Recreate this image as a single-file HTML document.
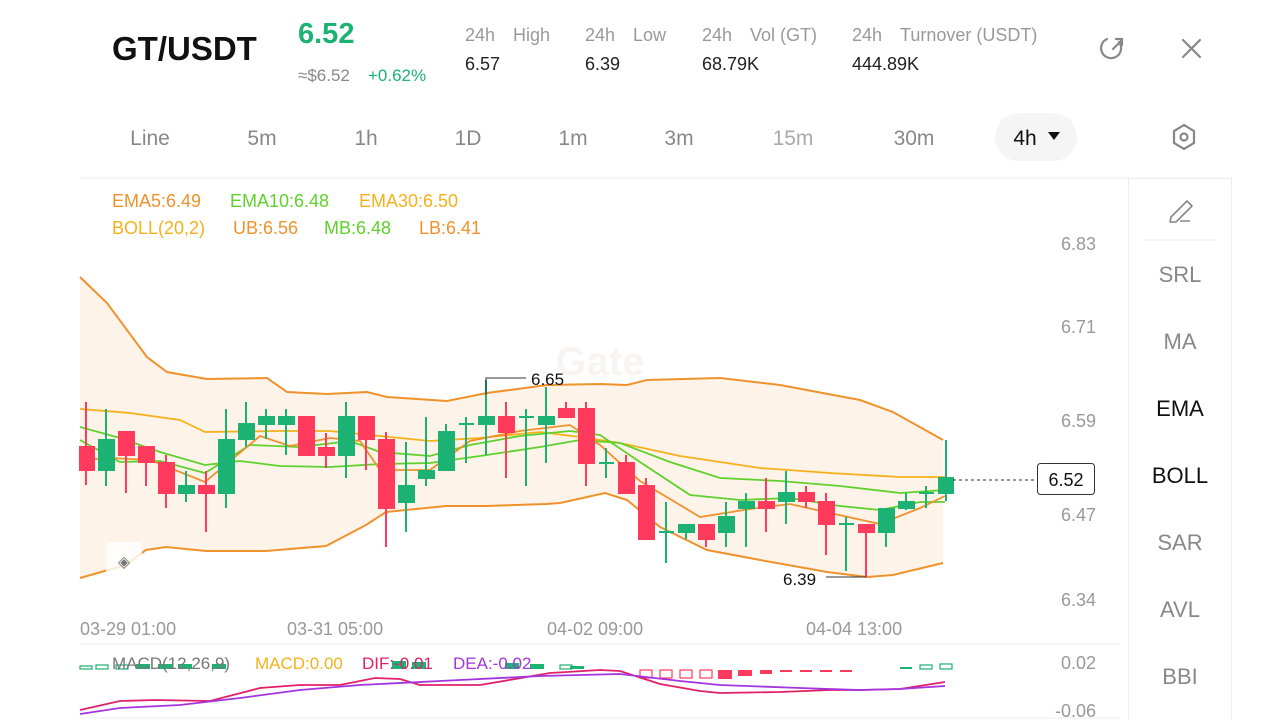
<!DOCTYPE html>
<html><head><meta charset="utf-8"><style>
html,body{margin:0;padding:0;background:#fff;width:1280px;height:720px;overflow:hidden;font-family:"Liberation Sans",Arial,sans-serif}
svg{display:block}
</style></head><body>
<svg width="1280" height="720" viewBox="0 0 1280 720" xmlns="http://www.w3.org/2000/svg" font-family="Liberation Sans, Arial, sans-serif">
<!-- header -->
<text x="112" y="60" font-size="33" font-weight="bold" fill="#111">GT/USDT</text>
<text x="298" y="43" font-size="29" font-weight="bold" fill="#1bb273">6.52</text>
<text x="298" y="81" font-size="17" fill="#888">≈$6.52</text>
<text x="368" y="81" font-size="17" fill="#1bb273">+0.62%</text>
<g font-size="18" fill="#999"><text x="465" y="41">24h</text><text x="513" y="41">High</text><text x="585" y="41">24h</text><text x="633" y="41">Low</text><text x="702" y="41">24h</text><text x="750" y="41">Vol (GT)</text><text x="852" y="41">24h</text><text x="900" y="41">Turnover (USDT)</text></g>
<g font-size="18" fill="#222"><text x="465" y="70">6.57</text><text x="585" y="70">6.39</text><text x="702" y="70">68.79K</text><text x="852" y="70">444.89K</text></g>
<g stroke="#888" stroke-width="2.2" fill="none" stroke-linecap="round">
<path d="M1119 42 A10 10 0 1 1 1107 39"/><path d="M1113 49 L1122 40 M1116 39 L1122 39 L1122 45"/>
<path d="M1183 40 L1200 57 M1200 40 L1183 57"/>
<path d="M1184 125 L1194 131 L1194 143 L1184 149 L1174 143 L1174 131 Z"/><circle cx="1184" cy="137" r="3.5"/>
</g>
<!-- tabs -->
<rect x="995" y="113" width="82" height="48" rx="24" fill="#f5f5f5"/>
<g font-size="21" fill="#888" text-anchor="middle">
<text x="150" y="145">Line</text><text x="262" y="145">5m</text><text x="366" y="145">1h</text><text x="468" y="145">1D</text><text x="573" y="145">1m</text><text x="679" y="145">3m</text><text x="793" y="145" fill="#aaa">15m</text><text x="914" y="145">30m</text>
<text x="1025" y="145" fill="#111">4h</text></g>
<path d="M1048 132 L1060 132 L1054 140 Z" fill="#111"/>
<!-- frame lines -->
<line x1="80" y1="178" x2="1232" y2="178" stroke="#eee"/>
<rect x="1128.5" y="178.5" width="103" height="545" fill="none" stroke="#eee"/>
<line x1="1144" y1="240" x2="1216" y2="240" stroke="#eee"/>
<path d="M1171 217 L1187 201 L1192 206 L1176 222 L1170 222 Z M1180 221 L1190 221" stroke="#888" stroke-width="1.6" fill="none" stroke-linejoin="round"/>
<g font-size="22" fill="#888" text-anchor="middle">
<text x="1180" y="282">SRL</text><text x="1180" y="349">MA</text><text x="1180" y="416" fill="#111">EMA</text><text x="1180" y="483" fill="#111">BOLL</text><text x="1180" y="550">SAR</text><text x="1180" y="617">AVL</text><text x="1180" y="684">BBI</text></g>
<!-- legend -->
<g font-size="18"><text x="112" y="207" fill="#f0922b">EMA5:6.49</text><text x="230" y="207" fill="#5fd12c">EMA10:6.48</text><text x="359" y="207" fill="#f5b11b">EMA30:6.50</text>
<text x="112" y="234" fill="#f5b11b">BOLL(20,2)</text><text x="233" y="234" fill="#f0922b">UB:6.56</text><text x="324" y="234" fill="#5fd12c">MB:6.48</text><text x="419" y="234" fill="#f0922b">LB:6.41</text></g>
<g font-size="18" fill="#999" text-anchor="end"><text x="1096" y="250">6.83</text><text x="1096" y="333">6.71</text><text x="1096" y="427">6.59</text><text x="1096" y="521">6.47</text><text x="1096" y="606">6.34</text></g>
<!-- bands -->
<path d="M80 277 L107 303 L147 357 L167 372 L207 379 L267 378 L287 392 L327 394 L367 392 L387 397 L447 401 L487 393 L547 385 L600 384 L627 385 L647 380 L720 378 L780 385 L860 400 L893 412 L943 440 L943 563 L893 575 L867 577 L827 572 L760 560 L707 550 L660 527 L627 500 L605 493 L560 503 L546 504 L486 506 L446 506 L386 512 L366 525 L326 546 L266 551 L206 551 L166 547 L146 550 L126 565 L80 578 Z" fill="#fef3e8"/>
<g fill="none" stroke="#f0922b" stroke-width="2">
<path d="M80 277 L107 303 L147 357 L167 372 L207 379 L267 378 L287 392 L327 394 L367 392 L387 397 L447 401 L487 393 L547 385 L600 384 L627 385 L647 380 L720 378 L780 385 L860 400 L893 412 L943 440"/>
<path d="M80 578 L126 565 L146 550 L166 547 L206 551 L266 551 L326 546 L366 525 L386 512 L446 506 L486 506 L546 504 L560 503 L605 493 L627 500 L660 527 L707 550 L760 560 L827 572 L867 577 L893 575 L943 563"/>
</g>
<text x="600" y="375" font-size="40" font-weight="bold" fill="#f7f4f2" text-anchor="middle">Gate</text>
<!-- lines -->
<g fill="none" stroke-width="1.8">
<path stroke="#f5b11b" d="M80 409 L130 413 L180 420 L205 432 L280 431 L330 431 L380 436 L430 441 L480 438 L540 432 L580 437 L620 443 L680 456 L760 468 L830 473 L900 477 L945 477"/>
<path stroke="#5fd12c" d="M80 427 L120 438 L160 452 L205 465 L240 461 L280 466 L330 467 L380 464 L430 463 L480 456 L540 447 L580 440 L620 443 L670 462 L720 478 L780 481 L840 486 L900 493 L945 490"/>
<path stroke="#5fd12c" d="M80 440 L120 462 L160 461 L205 473 L250 445 L300 447 L350 441 L380 452 L430 456 L470 445 L520 436 L570 431 L600 435 L640 462 L690 495 L740 500 L790 498 L840 506 L880 510 L920 502 L945 502"/>
<path stroke="#f0922b" d="M80 460 L110 458 L150 460 L205 482 L260 436 L290 446 L330 438 L360 441 L380 470 L430 470 L470 441 L520 431 L570 425 L600 445 L640 481 L700 517 L750 509 L790 504 L830 513 L880 524 L920 508 L945 496"/>
</g>
<!-- candles -->
<g stroke-width="2">
<g stroke="#ff3a5c" fill="#ff3a5c">
<line x1="86" y1="402" x2="86" y2="485"/><rect x="80" y="447" width="14" height="23"/>
<line x1="126" y1="432" x2="126" y2="493"/><rect x="119" y="432" width="15" height="23"/>
<line x1="146" y1="447" x2="146" y2="486"/><rect x="139" y="447" width="15" height="15"/>
<line x1="166" y1="455" x2="166" y2="508"/><rect x="159" y="463" width="15" height="30"/>
<line x1="206" y1="471" x2="206" y2="532"/><rect x="199" y="486" width="15" height="7"/>
<line x1="306" y1="417" x2="306" y2="455"/><rect x="299" y="417" width="15" height="38"/>
<line x1="326" y1="433" x2="326" y2="468"/><rect x="319" y="448" width="15" height="7"/>
<line x1="366" y1="417" x2="366" y2="470"/><rect x="359" y="417" width="15" height="22"/>
<line x1="386" y1="432" x2="386" y2="547"/><rect x="379" y="440" width="15" height="68"/>
<line x1="506" y1="402" x2="506" y2="478"/><rect x="499" y="417" width="15" height="15"/>
<line x1="566" y1="402" x2="566" y2="417"/><rect x="559" y="409" width="15" height="8"/>
<line x1="586" y1="402" x2="586" y2="486"/><rect x="579" y="409" width="15" height="54"/>
<line x1="626" y1="455" x2="626" y2="493"/><rect x="619" y="463" width="15" height="30"/>
<line x1="646" y1="478" x2="646" y2="539"/><rect x="639" y="486" width="15" height="53"/>
<line x1="706" y1="525" x2="706" y2="547"/><rect x="699" y="525" width="15" height="14"/>
<line x1="766" y1="478" x2="766" y2="532"/><rect x="759" y="502" width="15" height="6"/>
<line x1="806" y1="486" x2="806" y2="508"/><rect x="799" y="493" width="15" height="8"/>
<line x1="826" y1="493" x2="826" y2="555"/><rect x="819" y="502" width="15" height="22"/>
<line x1="866" y1="525" x2="866" y2="577"/><rect x="859" y="525" width="15" height="7"/>
</g>
<g stroke="#1bb273" fill="#1bb273">
<line x1="106" y1="409" x2="106" y2="486"/><rect x="99" y="440" width="15" height="30"/>
<line x1="186" y1="471" x2="186" y2="502"/><rect x="179" y="486" width="15" height="7"/>
<line x1="226" y1="409" x2="226" y2="508"/><rect x="219" y="440" width="15" height="53"/>
<line x1="246" y1="402" x2="246" y2="447"/><rect x="239" y="424" width="15" height="15"/>
<line x1="266" y1="409" x2="266" y2="439"/><rect x="259" y="417" width="15" height="7"/>
<line x1="286" y1="409" x2="286" y2="455"/><rect x="279" y="417" width="15" height="7"/>
<line x1="346" y1="402" x2="346" y2="478"/><rect x="339" y="417" width="15" height="38"/>
<line x1="406" y1="442" x2="406" y2="532"/><rect x="399" y="486" width="15" height="16"/>
<line x1="426" y1="417" x2="426" y2="486"/><rect x="419" y="471" width="15" height="7"/>
<line x1="446" y1="424" x2="446" y2="470"/><rect x="439" y="432" width="15" height="38"/>
<line x1="466" y1="417" x2="466" y2="463"/><line x1="459" y1="424" x2="474" y2="424"/>
<line x1="486" y1="380" x2="486" y2="455"/><rect x="479" y="417" width="15" height="7"/>
<line x1="526" y1="409" x2="526" y2="486"/><line x1="519" y1="417" x2="534" y2="417"/>
<line x1="546" y1="387" x2="546" y2="463"/><rect x="539" y="417" width="15" height="7"/>
<line x1="606" y1="448" x2="606" y2="478"/><line x1="599" y1="463" x2="614" y2="463"/>
<line x1="666" y1="502" x2="666" y2="563"/><line x1="659" y1="532" x2="674" y2="532"/>
<line x1="686" y1="525" x2="686" y2="539"/><rect x="679" y="525" width="15" height="7"/>
<line x1="726" y1="502" x2="726" y2="547"/><rect x="719" y="517" width="15" height="15"/>
<line x1="746" y1="493" x2="746" y2="547"/><rect x="739" y="502" width="15" height="6"/>
<line x1="786" y1="471" x2="786" y2="524"/><rect x="779" y="493" width="15" height="8"/>
<line x1="846" y1="517" x2="846" y2="571"/><line x1="839" y1="524" x2="854" y2="524"/>
<line x1="886" y1="509" x2="886" y2="547"/><rect x="879" y="509" width="15" height="23"/>
<line x1="906" y1="493" x2="906" y2="510"/><rect x="899" y="502" width="15" height="6"/>
<line x1="926" y1="486" x2="926" y2="508"/><line x1="919" y1="493" x2="934" y2="493"/>
<line x1="946" y1="440" x2="946" y2="501"/><rect x="939" y="478" width="14" height="15"/>
</g></g>
<!-- markers -->
<path d="M486 395 L486 378 L526 378" stroke="#333" fill="none"/>
<text x="531" y="385" font-size="17" fill="#111">6.65</text>
<line x1="826" y1="577" x2="866" y2="577" stroke="#333"/>
<text x="783" y="585" font-size="17" fill="#111">6.39</text>
<line x1="953" y1="480" x2="1036" y2="480" stroke="#333" stroke-dasharray="3,3"/>
<rect x="1037.5" y="463.5" width="57" height="31" rx="3" fill="#fff" stroke="#333"/>
<text x="1066" y="486" font-size="18" fill="#111" text-anchor="middle">6.52</text>
<rect x="106" y="542" width="36" height="36" rx="4" fill="#fff" opacity="0.8"/>
<text x="124" y="567" font-size="16" fill="#777" text-anchor="middle">◈</text>
<!-- dates -->
<g font-size="18" fill="#999"><text x="80" y="635">03-29 01:00</text><text x="287" y="635">03-31 05:00</text><text x="547" y="635">04-02 09:00</text><text x="806" y="635">04-04 13:00</text></g>
<line x1="80" y1="644" x2="1120" y2="644" stroke="#eee"/>
<line x1="80" y1="718" x2="1120" y2="718" stroke="#eee"/>
<!-- macd -->
<g font-size="18" fill="#999" text-anchor="end"><text x="1096" y="669">0.02</text><text x="1096" y="717">-0.06</text></g>
<g stroke="#1bb273" fill="none" stroke-width="1.2"><rect x="80" y="666" width="12" height="3"/><rect x="96" y="665" width="12" height="4"/><rect x="116" y="665" width="12" height="4"/><rect x="560" y="665" width="12" height="4"/><rect x="920" y="665" width="12" height="4"/><rect x="940" y="664" width="12" height="5"/></g>
<g fill="#1bb273"><rect x="136" y="664" width="14" height="5"/><rect x="158" y="664" width="14" height="5"/><rect x="178" y="664" width="14" height="5"/><rect x="212" y="664" width="14" height="5"/><rect x="392" y="661" width="14" height="8"/><rect x="412" y="662" width="14" height="7"/><rect x="505" y="663" width="14" height="6"/><rect x="530" y="664" width="14" height="5"/><rect x="570" y="666" width="14" height="3"/><rect x="900" y="667" width="12" height="2"/></g>
<g stroke="#ff3a5c" fill="none" stroke-width="1.2"><rect x="640" y="670" width="12" height="8"/><rect x="660" y="670" width="12" height="8"/><rect x="680" y="670" width="12" height="8"/><rect x="700" y="670" width="12" height="8"/></g>
<g fill="#ff3a5c"><rect x="718" y="670" width="14" height="9"/><rect x="738" y="670" width="14" height="6"/><rect x="760" y="670" width="12" height="4"/><rect x="780" y="670" width="12" height="2"/><rect x="800" y="670" width="12" height="2"/><rect x="820" y="670" width="12" height="2"/><rect x="840" y="670" width="12" height="2"/></g>
<g font-size="17"><text x="112" y="669" fill="#777">MACD(12,26,9)</text><text x="255" y="669" fill="#f5b11b">MACD:0.00</text><text x="362" y="669" fill="#e0206a">DIF:-0.01</text><text x="453" y="669" fill="#a335e0">DEA:-0.02</text></g>
<path d="M80 710 L120 701 L155 700 L210 701 L260 688 L300 685 L340 685 L375 678 L400 679 L420 685 L480 685 L550 673 L600 670 L620 671 L660 684 L700 691 L720 693 L780 692 L830 690 L860 690 L900 689 L945 682" fill="none" stroke="#e0206a" stroke-width="1.8"/>
<path d="M80 714 L120 708 L180 705 L240 698 L300 690 L360 685 L440 681 L540 676 L620 674 L680 681 L720 685 L800 688 L860 690 L900 689 L945 686" fill="none" stroke="#a335e0" stroke-width="1.8"/>
</svg>
</body></html>
